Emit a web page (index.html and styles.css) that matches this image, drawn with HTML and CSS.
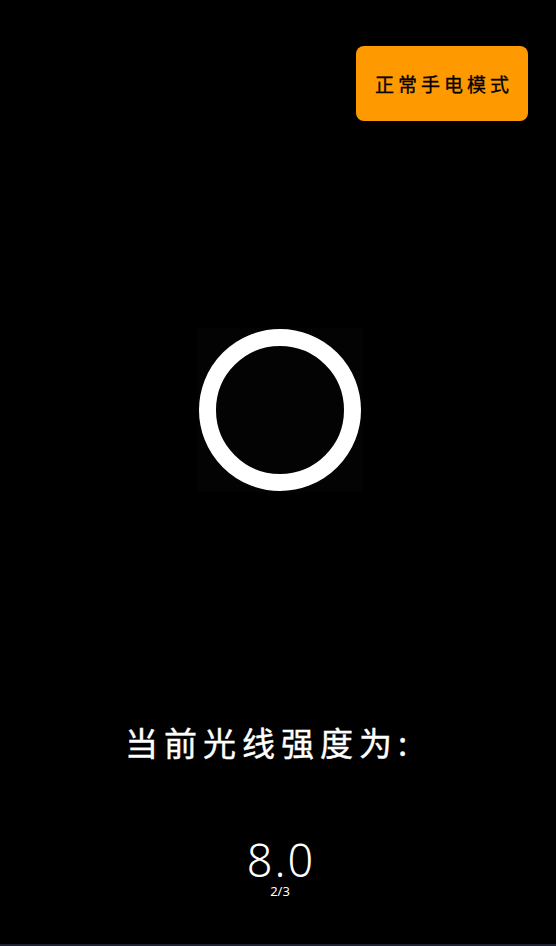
FILE: index.html
```html
<!DOCTYPE html>
<html lang="zh">
<head>
<meta charset="utf-8">
<link rel="stylesheet" href="styles.css">
</head>
<body>
<div class="screen">
  <div class="top">
    <button class="mode-btn">正常手电模式</button>
  </div>
  <div class="light">
    <div class="ring"></div>
  </div>
  <div class="label">当前光线强度为:</div>
  <div class="value">8.0</div>
  <div class="page">2/3</div>
</div>
</body>
</html>
```
FILE: styles.css
```css
html, body {
  margin: 0;
  padding: 0;
  background: #000;
}
.screen {
  width: 556px;
  height: 946px;
  box-sizing: border-box;
  display: flex;
  flex-direction: column;
  align-items: center;
  border-bottom: 2px solid #1e2230;
  font-family: "Noto Sans CJK SC", "Noto Sans", sans-serif;
}
.top {
  align-self: stretch;
  display: flex;
  justify-content: flex-end;
  padding: 46px 28px 0 0;
}
.mode-btn {
  width: 172px;
  height: 75px;
  border: none;
  border-radius: 8px;
  background: #ff9900;
  color: #000;
  font-family: "Noto Sans CJK SC", sans-serif;
  font-size: 19px;
  letter-spacing: 4px;
  padding: 0 0 0 4px;
  -webkit-text-stroke: 0.3px #000;
}
.light {
  margin-top: 207px;
  margin-left: 3px;
  width: 164px;
  height: 164px;
  background: #030303;
  display: flex;
  align-items: center;
  justify-content: center;
}
.ring {
  width: 162px;
  height: 162px;
  box-sizing: border-box;
  border: 17px solid #fff;
  border-radius: 50%;
}
.label {
  margin-top: 230px;
  margin-right: 18px;
  color: #fff;
  font-size: 33px;
  line-height: 40px;
  letter-spacing: 6px;
  -webkit-text-stroke: 0.4px #fff;
}
.value {
  margin-top: 76px;
  color: #fff;
  font-family: "Noto Sans", sans-serif;
  font-weight: 300;
  font-size: 45px;
  line-height: 44px;
  letter-spacing: 2px;
  margin-left: 6px;
}
.page {
  margin-top: 2px;
  color: #fff;
  font-family: "Noto Sans", sans-serif;
  font-size: 13px;
  line-height: 15px;
  margin-left: 4px;
}
```
